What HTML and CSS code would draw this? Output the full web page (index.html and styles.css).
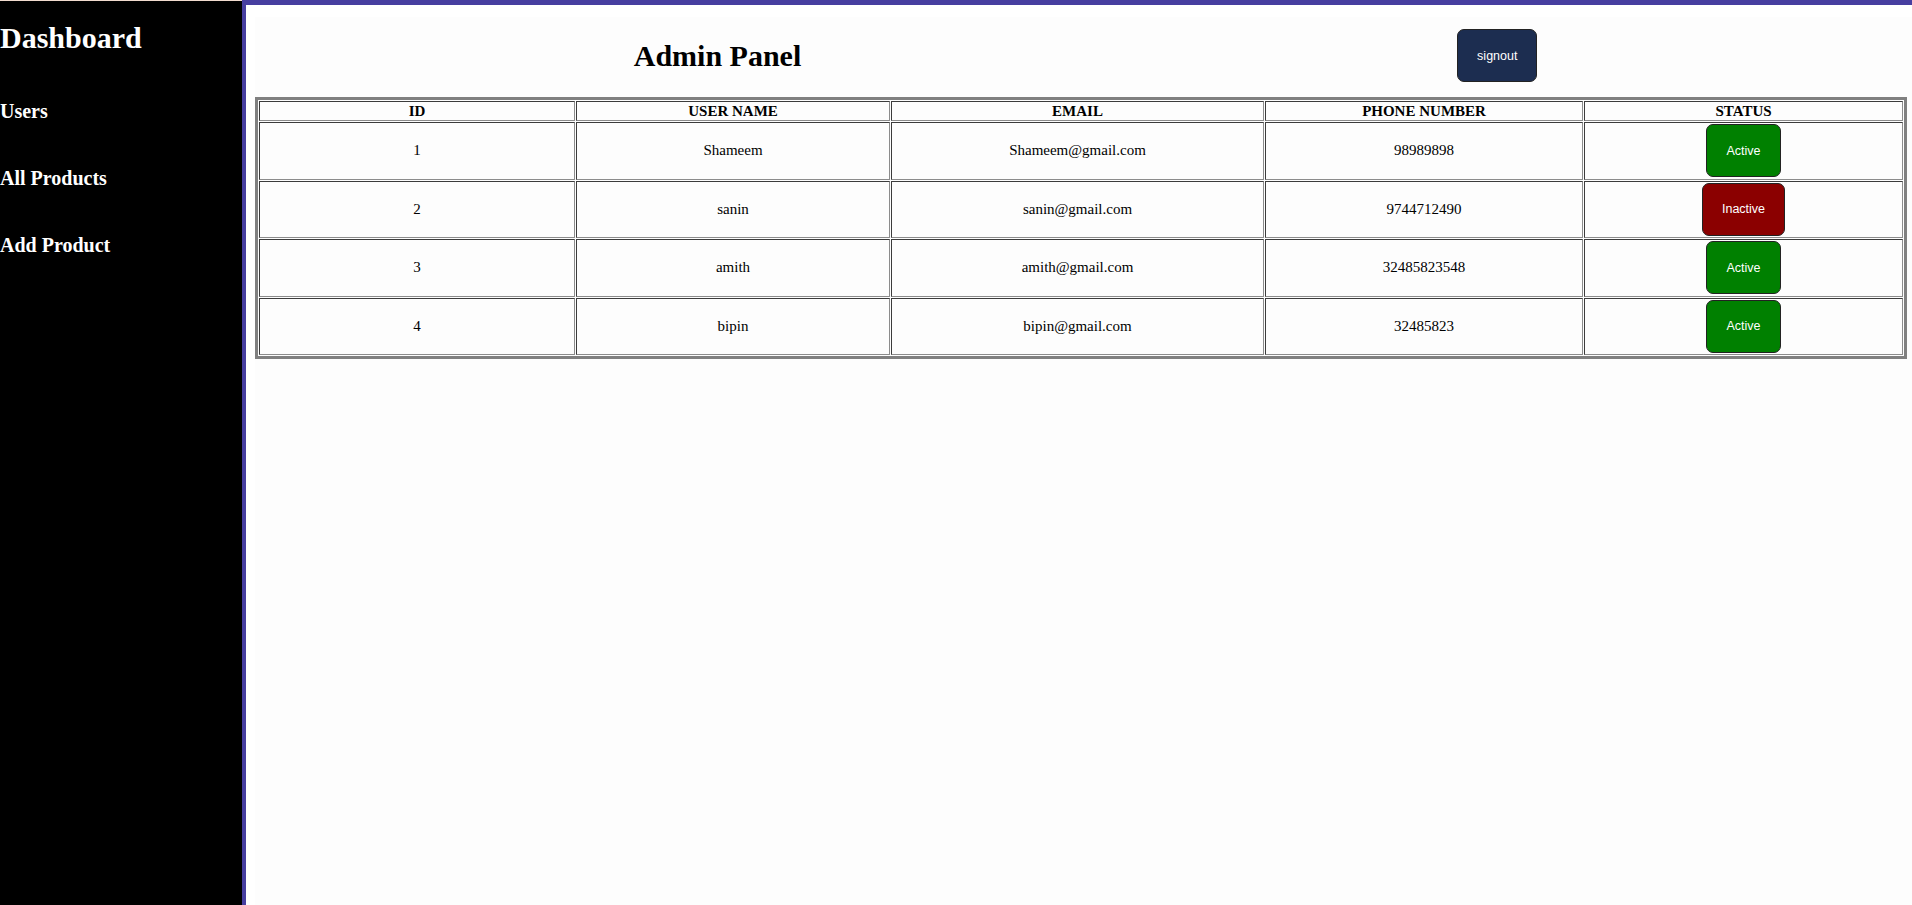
FILE: index.html
```html
<!DOCTYPE html>
<html lang="en">
<head>
<meta charset="utf-8">
<title>Admin Panel</title>
<link rel="stylesheet" href="styles.css">
</head>
<body>
<div class="layout">
  <aside class="sidebar">
    <h1 class="brand">Dashboard</h1>
    <nav class="nav">
      <a class="nav-link" href="#">Users</a>
      <a class="nav-link" href="#">All Products</a>
      <a class="nav-link" href="#">Add Product</a>
    </nav>
  </aside>
  <main class="main">
    <div class="content">
      <header class="topbar">
        <h1 class="title">Admin Panel</h1>
        <button class="btn btn-signout">signout</button>
      </header>
      <table class="users">
        <colgroup>
          <col class="c-id">
          <col class="c-name">
          <col class="c-email">
          <col class="c-phone">
          <col class="c-status">
        </colgroup>
        <thead>
          <tr><th>ID</th><th>USER NAME</th><th>EMAIL</th><th>PHONE NUMBER</th><th>STATUS</th></tr>
        </thead>
        <tbody>
          <tr><td>1</td><td>Shameem</td><td>Shameem@gmail.com</td><td>98989898</td><td><button class="btn btn-active">Active</button></td></tr>
          <tr><td>2</td><td>sanin</td><td>sanin@gmail.com</td><td>9744712490</td><td><button class="btn btn-inactive">Inactive</button></td></tr>
          <tr><td>3</td><td>amith</td><td>amith@gmail.com</td><td>32485823548</td><td><button class="btn btn-active">Active</button></td></tr>
          <tr><td>4</td><td>bipin</td><td>bipin@gmail.com</td><td>32485823</td><td><button class="btn btn-active">Active</button></td></tr>
        </tbody>
      </table>
    </div>
  </main>
</div>
</body>
</html>
```
FILE: styles.css
```css
* { box-sizing: border-box; }
html, body { margin: 0; padding: 0; height: 100%; }
body {
  font-family: "Liberation Serif", "Times New Roman", serif;
  background: #ffffff;
  color: #000;
}
.layout {
  display: flex;
  min-height: 100vh;
}
.sidebar {
  width: 242px;
  flex: 0 0 242px;
  background: #000;
  border-top: 1px solid #f2dccf;
  color: #fff;
  padding-top: 20px;
}
.brand {
  margin: 0;
  font-size: 30px;
  line-height: 34px;
  font-weight: bold;
}
.nav {
  display: flex;
  flex-direction: column;
  gap: 44px;
  margin-top: 45px;
}
.nav-link {
  color: #fff;
  text-decoration: none;
  font-size: 20px;
  line-height: 23px;
  font-weight: bold;
}
.main {
  flex: 1;
  background: #ffffff;
  border-top: 5px solid #473ea0;
  border-left: 4px solid #473ea0;
  display: flex;
  flex-direction: column;
}
.content {
  flex: 1;
  margin: 12px 0 0 9px;
  padding-right: 6px;
  background: #fdfdfd;
}
.topbar {
  display: flex;
  justify-content: center;
  align-items: center;
  gap: 656px;
  padding: 12px 0 15px 9px;
}
.title {
  margin: 0;
  font-size: 30px;
  line-height: 34px;
  font-weight: bold;
}
.btn {
  font-family: "Liberation Sans", Arial, sans-serif;
  font-size: 12.5px;
  color: #fff;
  height: 53px;
  padding: 0 19px;
  border: 1px solid #222;
  border-radius: 7px;
  cursor: pointer;
}
.btn-signout { background: #1c2d50; width: 80px; padding: 0; }
.btn-active { background: #008000; }
.btn-inactive { background: #8b0000; }

.users {
  width: 100%;
  table-layout: fixed;
  border: 3px solid #808080;
  border-spacing: 1.4px;
  font-size: 15px;
  background: #fdfdfd;
}
.c-id { width: 316px; }
.c-name { width: 314px; }
.c-email { width: 373px; }
.c-phone { width: 318px; }
.c-status { width: 319px; }
.users th,
.users td {
  border: 1px solid;
  border-color: #3c3c3c #8c8c8c #8c8c8c #3c3c3c;
  text-align: center;
  padding: 1px;
}
.users th {
  font-weight: bold;
  line-height: 16px;
}
.users td {
  height: 57.5px;
  line-height: 17px;
  vertical-align: middle;
}
.users td .btn {
  display: block;
  margin: 0 auto;
}
```
